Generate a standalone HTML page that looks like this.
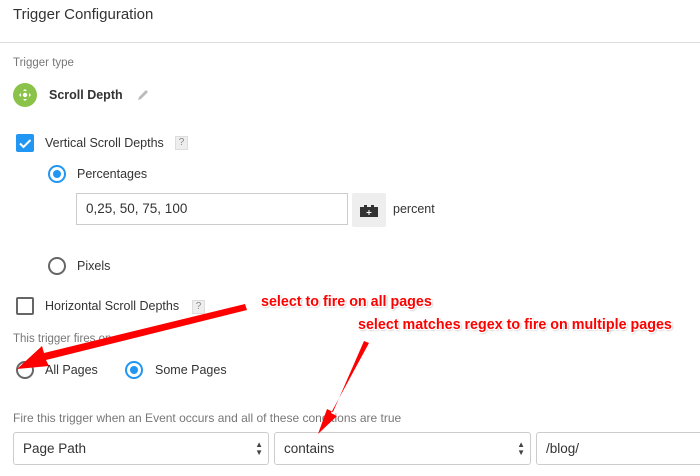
<!DOCTYPE html>
<html><head><meta charset="utf-8"><style>
*{margin:0;padding:0;box-sizing:border-box}
body{width:700px;height:476px;overflow:hidden;background:#fff;font-family:"Liberation Sans",sans-serif;color:#222;position:relative}
.a{position:absolute;white-space:nowrap}
.g{color:#777;font-size:11px}
.t{font-size:12.5px;color:#333}
.q{position:absolute;width:13px;height:14px;background:#eee;border:1px solid #ddd;font-size:10px;color:#888;text-align:center;line-height:12px}
.r{position:absolute;width:18px;height:18px;border-radius:50%;border:2px solid #666}
.r.on{border-color:#2196f3}
.r.on::after{content:"";position:absolute;left:3px;top:3px;width:8px;height:8px;border-radius:50%;background:#2196f3}
.sel{position:absolute;top:432px;height:33px;border:1px solid #ccc;border-radius:3px;font-size:13.5px;color:#333;padding:0 0 0 9px;line-height:31px}
.ann{position:absolute;color:#f00;font-weight:bold;font-size:14.3px;white-space:nowrap;text-shadow:1px 1px 0 #fff,-1px -1px 0 #fff,1px -1px 0 #fff,-1px 1px 0 #fff,1px 1px 2px #888}
.arr{position:absolute;font-size:8px;color:#444;right:5px;top:8px;line-height:8px}
</style></head><body>
<div class="a" style="left:13px;top:6px;font-size:15px;color:#333">Trigger Configuration</div>
<div class="a" style="left:0;top:42px;width:700px;height:1px;background:#ddd"></div>
<div class="a g" style="left:13px;top:57px;font-size:11.5px">Trigger type</div>
<div class="a" style="left:13px;top:83px;width:24px;height:24px;border-radius:50%;background:#8bc34a"></div>
<svg class="a" style="left:13px;top:83px" width="24" height="24" viewBox="0 0 24 24"><circle cx="12" cy="12" r="2.2" fill="#fff"/><path d="M12 6l-2 2h4zM12 18l-2-2h4zM6 12l2-2v4zM18 12l-2-2v4z" fill="#fff"/></svg>
<div class="a" style="left:49px;top:88px;font-size:12.5px;font-weight:bold;color:#333">Scroll Depth</div>
<svg class="a" style="left:136px;top:88px" width="14" height="14" viewBox="0 0 14 14"><path d="M2 12l1-3 7-7 2 2-7 7z" fill="#bbb"/></svg>
<div class="a" style="left:16px;top:134px;width:18px;height:18px;background:#2196f3;border-radius:2px"></div>
<svg class="a" style="left:16px;top:134px" width="18" height="18"><path d="M4 9.5l3.5 3.5 7-7" stroke="#fff" stroke-width="2" fill="none"/></svg>
<div class="a t" style="left:45px;top:136px">Vertical Scroll Depths</div>
<div class="q" style="left:175px;top:136px">?</div>
<div class="r on" style="left:48px;top:165px"></div>
<div class="a t" style="left:77px;top:167px">Percentages</div>
<div class="a" style="left:76px;top:193px;width:272px;height:32px;border:1px solid #ccc;font-size:13.5px;color:#333;padding-left:9px;line-height:30px">0,25, 50, 75, 100</div>
<div class="a" style="left:352px;top:193px;width:34px;height:34px;background:#eee;border-radius:2px"></div>
<svg class="a" style="left:352px;top:193px" width="34" height="34"><path d="M8 14h4v-2h3v2h4v-2h3v2h4v10H8z" fill="#333"/><path d="M17 17v5M14.5 19.5h5" stroke="#fff" stroke-width="1"/></svg>
<div class="a t" style="left:393px;top:202px">percent</div>
<div class="r" style="left:48px;top:257px"></div>
<div class="a t" style="left:77px;top:259px">Pixels</div>
<div class="a" style="left:16px;top:297px;width:18px;height:18px;border:2px solid #666;border-radius:2px"></div>
<div class="a t" style="left:45px;top:299px">Horizontal Scroll Depths</div>
<div class="q" style="left:192px;top:300px">?</div>
<div class="a g" style="left:13px;top:333px;font-size:11.5px">This trigger fires on</div>
<div class="r" style="left:16px;top:361px"></div>
<div class="a t" style="left:45px;top:363px">All Pages</div>
<div class="r on" style="left:125px;top:361px"></div>
<div class="a t" style="left:155px;top:363px">Some Pages</div>
<div class="a g" style="left:13px;top:411px;font-size:12px">Fire this trigger when an Event occurs and all of these conditions are true</div>
<div class="sel" style="left:13px;width:256px">Page Path<span class="arr">▲<br>▼</span></div>
<div class="sel" style="left:274px;width:257px">contains<span class="arr">▲<br>▼</span></div>
<div class="sel" style="left:536px;width:170px">/blog/</div>
<svg class="a" style="left:0;top:0" width="700" height="476">
<path d="M245 304L44 353L42 346L17 369L49 366L46 360L247 310Z" fill="#f00"/>
<path d="M364 341L333 412L327 409L318 434L337 416L331 413L369 343Z" fill="#f00"/>
</svg>
<div class="ann" style="left:261px;top:294px">select to fire on all pages</div>
<div class="ann" style="left:358px;top:317px">select matches regex to fire on multiple pages</div>
</body></html>
